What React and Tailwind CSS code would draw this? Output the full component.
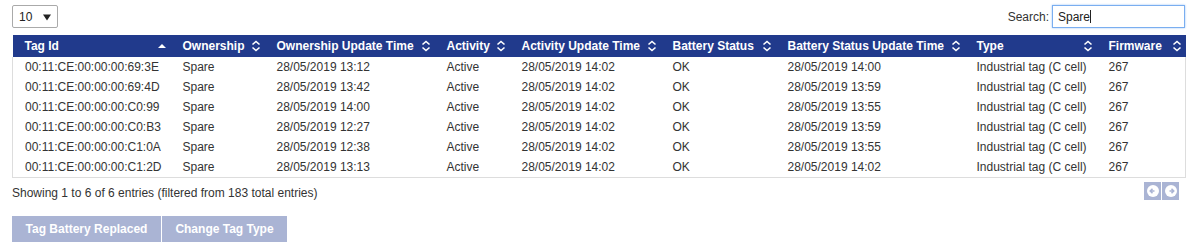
import React from "react";

const rows = [
  ["00:11:CE:00:00:00:69:3E", "28/05/2019 13:12", "28/05/2019 14:00", "28/05/2019 14:02"],
  ["00:11:CE:00:00:00:69:4D", "28/05/2019 13:42", "28/05/2019 13:59", "28/05/2019 14:02"],
  ["00:11:CE:00:00:00:C0:99", "28/05/2019 14:00", "28/05/2019 13:55", "28/05/2019 14:02"],
  ["00:11:CE:00:00:00:C0:B3", "28/05/2019 12:27", "28/05/2019 13:59", "28/05/2019 14:02"],
  ["00:11:CE:00:00:00:C1:0A", "28/05/2019 12:38", "28/05/2019 13:55", "28/05/2019 14:02"],
  ["00:11:CE:00:00:00:C1:2D", "28/05/2019 13:13", "28/05/2019 14:02", "28/05/2019 14:02"],
];

const cols = [
  ["Tag Id", "w-[158px]", "up"],
  ["Ownership", "w-[94px]", "both"],
  ["Ownership Update Time", "w-[170px]", "both"],
  ["Activity", "w-[75px]", "both"],
  ["Activity Update Time", "w-[151px]", "both"],
  ["Battery Status", "w-[115px]", "both"],
  ["Battery Status Update Time", "w-[189px]", "both"],
  ["Type", "w-[132px]", "both"],
  ["Firmware", "w-[89px]", "both"],
];

function SortIcon({ kind }) {
  if (kind === "up") {
    return (
      <svg width="10" height="10" viewBox="0 0 10 10" className="shrink-0">
        <path d="M1 7 L5 3 L9 7 Z" fill="white" />
      </svg>
    );
  }
  return (
    <svg width="10" height="12" viewBox="0 0 10 12" className="shrink-0">
      <path d="M1.5 4.5 L5 1.5 L8.5 4.5" fill="none" stroke="white" strokeWidth="1.6" />
      <path d="M1.5 7.5 L5 10.5 L8.5 7.5" fill="none" stroke="white" strokeWidth="1.6" />
    </svg>
  );
}

export default function App() {
  return (
    <div className="w-[1194px] h-[252px] bg-white text-[12px] text-[#333] pl-[12px] pr-[9px] pt-[5px]" style={{ fontFamily: '"Liberation Sans", Arial, sans-serif' }}>
      <div className="flex justify-between items-start h-[30px]">
        <div className="w-[46px] h-[23px] border border-[#aaa] rounded-[2px] flex items-center justify-between pl-[6px] pr-[6px]">
          <span className="text-[#222]">10</span>
          <svg width="8" height="8" viewBox="0 0 8 8"><path d="M0 1.5 L8 1.5 L4 7.5 Z" fill="#222" /></svg>
        </div>
        <div className="flex items-center gap-[3px]">
          <span className="text-[#333]">Search:</span>
          <div className="w-[133px] h-[23px] border border-[#7aaef0] shadow-[0_0_2px_#9cc4f5] flex items-center pl-[5px] text-[#222]">
            Spare<span className="w-[1px] h-[13px] bg-[#222]" />
          </div>
        </div>
      </div>
      <table className="table-fixed border-collapse w-[1173px]">
        <colgroup>
          {cols.map(([n, w]) => (<col key={n} className={w} />))}
        </colgroup>
        <thead>
          <tr className="bg-[#213a8c] h-[22px]">
            {cols.map(([n, w, k]) => (
              <th key={n} className="p-0 text-left font-bold text-white">
                <div className="flex items-center justify-between pl-[12px] pr-[4px]">
                  <span className="whitespace-nowrap">{n}</span>
                  <SortIcon kind={k} />
                </div>
              </th>
            ))}
          </tr>
        </thead>
        <tbody className="border border-t-0 border-[#ddd]">
          {rows.map((r) => (
            <tr key={r[0]} className="h-[20px]">
              <td className="pl-[12px] whitespace-nowrap">{r[0]}</td>
              <td className="pl-[12px]">Spare</td>
              <td className="pl-[12px] whitespace-nowrap">{r[1]}</td>
              <td className="pl-[12px]">Active</td>
              <td className="pl-[12px] whitespace-nowrap">{r[3]}</td>
              <td className="pl-[12px]">OK</td>
              <td className="pl-[12px] whitespace-nowrap">{r[2]}</td>
              <td className="pl-[12px] whitespace-nowrap">Industrial tag (C cell)</td>
              <td className="pl-[12px]">267</td>
            </tr>
          ))}
        </tbody>
      </table>
      <div className="flex justify-between items-center w-[1173px] mt-[5px] h-[20px]">
        <span>Showing 1 to 6 of 6 entries (filtered from 183 total entries)</span>
        <div className="flex gap-[1px] mr-[6px] -mt-[3px]">
          <div className="w-[17px] h-[18px] bg-[#aab4d4] flex items-center justify-center">
            <svg width="12" height="12" viewBox="0 0 12 12"><circle cx="6" cy="6" r="6" fill="white" /><path d="M7.5 6 H3.5 M5.5 3.8 L3.3 6 L5.5 8.2" stroke="#aab4d4" strokeWidth="1.6" fill="none" /></svg>
          </div>
          <div className="w-[17px] h-[18px] bg-[#aab4d4] flex items-center justify-center">
            <svg width="12" height="12" viewBox="0 0 12 12"><circle cx="6" cy="6" r="6" fill="white" /><path d="M4.5 6 H8.5 M6.5 3.8 L8.7 6 L6.5 8.2" stroke="#aab4d4" strokeWidth="1.6" fill="none" /></svg>
          </div>
        </div>
      </div>
      <div className="flex gap-[1px] mt-[13px]">
        <div className="w-[149px] h-[26px] bg-[#aab4d4] text-white font-bold flex items-center justify-center">Tag Battery Replaced</div>
        <div className="w-[125px] h-[26px] bg-[#aab4d4] text-white font-bold flex items-center justify-center">Change Tag Type</div>
      </div>
    </div>
  );
}
